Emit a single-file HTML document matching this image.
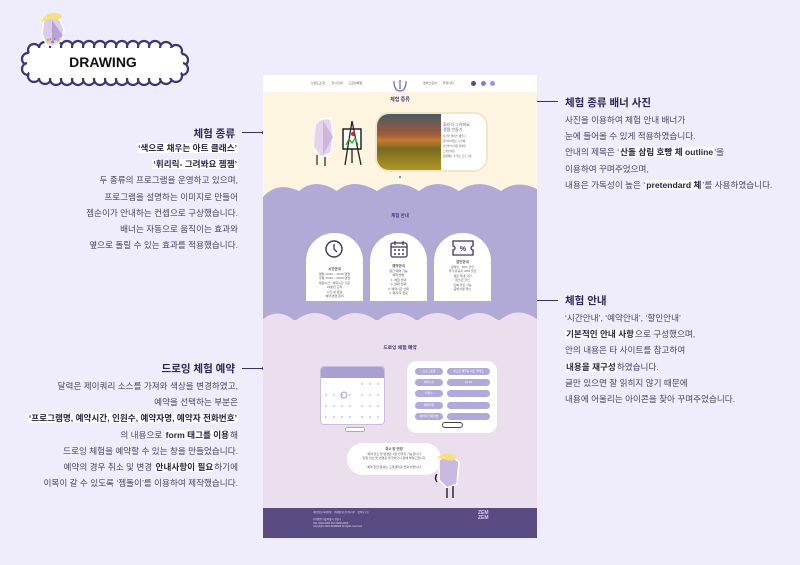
<!DOCTYPE html>
<html><head><meta charset="utf-8">
<style>
*{margin:0;padding:0;box-sizing:border-box}
body{width:800px;height:565px;background:#efecfb;position:relative;overflow:hidden;font-family:"Liberation Sans","Noto Sans CJK KR",sans-serif;color:#3a3355}
.a{position:absolute}
.t{font-size:8.6px;line-height:16.2px;color:#4a4560;white-space:nowrap}
.r{text-align:right}
.h{font-weight:bold;font-size:10.5px;color:#2e2656;white-space:nowrap}
.b{font-weight:bold;color:#2a2440;background:#fff;padding:0 1px}
.ln{position:absolute;height:1px;background:#3a2f6e}
.dot{position:absolute;width:5px;height:5px;border-radius:50%;background:#3a2f6e}
.s{font-size:3px;color:#555;line-height:4.5px;text-align:center;white-space:nowrap}
.pill{position:absolute;height:7px;border-radius:4px;background:#b1a8db;font-size:2.8px;color:#fff;text-align:center;line-height:7px}
</style></head><body>

<!-- logo -->
<svg class="a" style="left:0;top:0" width="200" height="90" viewBox="0 0 200 90">
 <g fill="#fff" stroke="#3d3475" stroke-width="2.2">
  <circle cx="34" cy="50" r="6"/><circle cx="45" cy="48" r="6"/><circle cx="56" cy="47" r="6"/><circle cx="67" cy="47" r="6"/><circle cx="78" cy="47" r="6"/><circle cx="89" cy="47" r="6"/><circle cx="100" cy="47" r="6"/><circle cx="111" cy="47" r="6"/><circle cx="122" cy="47" r="6"/><circle cx="133" cy="47" r="6"/><circle cx="144" cy="47" r="6"/><circle cx="155" cy="47" r="6"/><circle cx="166" cy="48" r="6"/><circle cx="176" cy="51" r="6"/>
  <circle cx="182" cy="60" r="6"/><circle cx="182" cy="69" r="6"/><circle cx="28" cy="59" r="6"/><circle cx="28" cy="69" r="6"/>
  <circle cx="34" cy="76" r="6"/><circle cx="45" cy="78" r="6"/><circle cx="56" cy="79" r="6"/><circle cx="67" cy="79" r="6"/><circle cx="78" cy="79" r="6"/><circle cx="89" cy="79" r="6"/><circle cx="100" cy="79" r="6"/><circle cx="111" cy="79" r="6"/><circle cx="122" cy="79" r="6"/><circle cx="133" cy="79" r="6"/><circle cx="144" cy="79" r="6"/><circle cx="155" cy="79" r="6"/><circle cx="166" cy="78" r="6"/><circle cx="176" cy="76" r="6"/>
 </g>
 <rect x="27" y="48" width="156" height="30" rx="12" fill="#fff"/>
 <path d="M44 18 Q52 14 60 20 L64 30 L62 40 L54 46 L46 44 L42 34 Z" fill="#d9cde8" stroke="#fff" stroke-width="1.5"/>
 <path d="M42 20 Q48 10 60 14 Q64 18 56 20 Q50 18 42 22Z" fill="#f5e27a"/>
 <path d="M52 20 L63 36 L52 42Z" fill="#b7a3d6"/>
 <circle cx="48" cy="40" r="1.5" fill="#f4a460"/><circle cx="58" cy="40" r="1.5" fill="#f4a460"/>
 <path d="M50 39h1M54 39h1M51 42h3" stroke="#333" stroke-width=".8"/>
 <text x="103" y="67" font-family="Liberation Sans" font-weight="bold" font-size="14" text-anchor="middle" fill="#111">DRAWING</text>
</svg>

<!-- left annotations -->
<div class="a h r" style="right:565px;top:126px">체험 종류</div>
<div class="ln" style="left:242px;top:132px;width:22px"></div><div class="dot" style="left:262px;top:130px"></div>
<div class="a t r" style="right:562px;top:140px"><span class="b">‘색으로 채우는 아트 클래스’</span><br><span class="b">‘휘리릭- 그려봐요 젬젬’</span><br>두 종류의 프로그램을 운영하고 있으며,<br>프로그램을 설명하는 이미지로 만들어<br>젬순이가 안내하는 컨셉으로 구상했습니다.<br>배너는 자동으로 움직이는 효과와<br>옆으로 돌릴 수 있는 효과를 적용했습니다.</div>

<div class="a h r" style="right:565px;top:361px">드로잉 체험 예약</div>
<div class="ln" style="left:242px;top:368px;width:22px"></div><div class="dot" style="left:262px;top:366px"></div>
<div class="a t r" style="right:562px;top:378px">달력은 제이쿼리 소스를 가져와 색상을 변경하였고,<br>예약을 선택하는 부분은<br><span class="b">‘프로그램명, 예약시간, 인원수, 예약자명, 예약자 전화번호’</span><br>의 내용으로 <span class="b">form 태그를 이용</span>해<br>드로잉 체험을 예약할 수 있는 창을 만들었습니다.<br>예약의 경우 취소 및 변경 <span class="b">안내사항이 필요</span>하기에<br>이목이 갈 수 있도록 ‘젬돌이’를 이용하여 제작했습니다.</div>

<!-- right annotations -->
<div class="a h" style="left:565px;top:95px">체험 종류 배너 사진</div>
<div class="ln" style="left:526px;top:101px;width:32px"></div><div class="dot" style="left:523px;top:99px"></div>
<div class="a t" style="left:565px;top:112px">사진을 이용하여 체험 안내 배너가<br>눈에 들어올 수 있게 적용하였습니다.<br>안내의 제목은 ‘<span class="b">산돌 삼림 호빵 체 outline</span>’을<br>이용하여 꾸며주었으며,<br>내용은 가독성이 높은 ‘<span class="b">pretendard 체</span>’를 사용하였습니다.</div>

<div class="a h" style="left:565px;top:293px">체험 안내</div>
<div class="ln" style="left:526px;top:300px;width:32px"></div><div class="dot" style="left:523px;top:298px"></div>
<div class="a t" style="left:565px;top:310px">‘시간안내’, ‘예약안내’, ‘할인안내’<br><span class="b">기본적인 안내 사항</span>으로 구성했으며,<br>안의 내용은 타 사이트를 참고하여<br><span class="b">내용을 재구성</span>하였습니다.<br>글만 있으면 잘 읽히지 않기 때문에<br>내용에 어울리는 아이콘을 찾아 꾸며주었습니다.</div>

<!-- page mock -->
<div class="a" style="left:263px;top:75px;width:274px;height:463px;overflow:hidden;background:#ebdfee">
 <div class="a" style="left:0;top:0;width:274px;height:17px;background:#fff"></div>
 <div class="a s" style="left:48px;top:6px;font-size:3px">브랜드소개 &nbsp;&nbsp;&nbsp;&nbsp;&nbsp;&nbsp; 전시안내 &nbsp;&nbsp;&nbsp;&nbsp;&nbsp; 드로잉체험</div>
 <div class="a s" style="left:160px;top:6px;font-size:3px">멤버스토어 &nbsp;&nbsp;&nbsp;&nbsp;&nbsp; 커뮤니티</div>
 <div class="a" style="left:208px;top:6px;width:5px;height:5px;border-radius:50%;background:#5b4a8a"></div>
 <div class="a" style="left:218px;top:6px;width:5px;height:5px;border-radius:50%;background:#8a7dbd"></div>
 <div class="a" style="left:227px;top:6px;width:5px;height:5px;border-radius:50%;background:#a395d0"></div>
 <svg class="a" style="left:128px;top:3px" width="18" height="17"><path d="M3 3 q0 10 6 10 q6 0 6-10 M9 2 v9" stroke="#7a6bb5" fill="none" stroke-width="1.3"/></svg>
 <div class="a" style="left:0;top:17px;width:274px;height:105px;background:#fdf5df"></div>
 <div class="a" style="left:0;top:21px;width:274px;text-align:center;font-size:5px;font-weight:bold;color:#4a3d7a">체험 종류</div>
 <svg class="a" style="left:46px;top:40px" width="60" height="60" viewBox="0 0 60 60">
  <path d="M6 10 Q10 2 22 4 L24 20 L22 38 L12 42 L4 32 Z" fill="#e6d3ec" stroke="#fff" stroke-width="1.5"/>
  <path d="M14 6 L24 22 L14 40Z" fill="#cdb7df"/>
  <path d="M8 40 v10 M16 42 v9" stroke="#222" stroke-width="1.2"/>
  <rect x="34" y="14" width="18" height="20" fill="#fff" stroke="#222" stroke-width="1.5"/>
  <path d="M43 6 L36 50 M43 6 L52 50 M43 34 v14" stroke="#222" stroke-width="1.3"/>
  <circle cx="44" cy="19" r="2" fill="#d22"/>
  <path d="M37 30 l3-6 3 4 3-5 3 7" stroke="#2a2" fill="none" stroke-width="1.2"/>
 </svg>
 <div class="a" style="left:112px;top:37px;width:113px;height:60px;border-radius:14px;background:#fff;border:2px solid #f0e6c8;overflow:hidden">
  <div class="a" style="left:0;top:0;width:64px;height:58px;background:linear-gradient(#4a5a63 0%,#a05a3a 35%,#c77a30 45%,#7a6a20 60%,#b59a22 100%)"></div>
  <div class="a s" style="left:66px;top:8px;text-align:left;color:#6a5aa0;font-size:4px;line-height:5px">휘리릭 그려봐요<br>젬젬 만들기</div>
  <div class="a s" style="left:66px;top:20px;text-align:left;font-size:2.6px;line-height:5px">자신만 캔버스 채우는<br>준비되어있는 도안에<br>자신만의 색을 칠하며<br>느껴보세요<br>함께해요 수 있는 프로그램</div>
 </div>
 <div class="a" style="left:136px;top:101px;width:2px;height:2px;background:#8a7dbd"></div>
 <svg class="a" style="left:0;top:108px" width="274" height="137" viewBox="0 0 274 137">
  <path d="M0 14 Q14 -2 36 8 Q52 -6 74 8 Q90 -6 114 8 Q134 -6 156 8 Q174 -6 196 8 Q216 -6 238 8 Q254 -4 274 6 V137 H0Z" fill="#b1aad6"/>
 </svg>
 <div class="a" style="left:0;top:138px;width:274px;text-align:center;font-size:4.5px;font-weight:bold;color:#4a3d7a">체험 안내</div>
 <div class="a" style="left:43px;top:158px;width:57px;height:68px;background:#fff;border-radius:28px 28px 0 0"></div>
 <div class="a" style="left:107px;top:158px;width:57px;height:68px;background:#fff;border-radius:28px 28px 0 0"></div>
 <div class="a" style="left:171px;top:158px;width:57px;height:68px;background:#fff;border-radius:28px 28px 0 0"></div>
 <svg class="a" style="left:61px;top:164px" width="20" height="20"><circle cx="10" cy="10" r="8" fill="none" stroke="#3d2f6e" stroke-width="1.4"/><path d="M10 5v5l3 3" stroke="#3d2f6e" fill="none" stroke-width="1.3"/></svg>
 <svg class="a" style="left:126px;top:164px" width="20" height="20"><rect x="2" y="4" width="16" height="14" rx="2" fill="none" stroke="#3d2f6e" stroke-width="1.3"/><path d="M2 8h16M6 2v4M14 2v4" stroke="#3d2f6e" stroke-width="1.2"/><path d="M5 11h2M9 11h2M13 11h2M5 15h2M9 15h2M13 15h2" stroke="#3d2f6e" stroke-width="1.4"/></svg>
 <svg class="a" style="left:189px;top:165px" width="22" height="16"><path d="M1 1h20v5a2 2 0 0 0 0 4v5H1v-5a2 2 0 0 0 0-4z" fill="none" stroke="#3d2f6e" stroke-width="1.3"/><text x="11" y="11" font-size="7" font-weight="bold" text-anchor="middle" fill="#3d2f6e" font-family="Liberation Sans">%</text></svg>
 <div class="a s" style="left:43px;top:192px;width:57px"><b style="font-size:3.4px">시간안내</b><br>평일 10:00 ~ 19:00 영업<br>주말 10:00 ~ 20:00 영업<br>체험시간 : 예약시간 기준<br>15분전 도착<br>시간 내 완료<br>예약 변경 문의</div>
 <div class="a s" style="left:107px;top:189px;width:57px"><b style="font-size:3.4px">예약안내</b><br>월간 예약 가능<br>예약 방법<br>1. 체험 선택<br>2. 날짜 선택<br>3. 예약시간 선택<br>4. 결제 후 완료</div>
 <div class="a s" style="left:171px;top:185px;width:57px"><b style="font-size:3.4px">할인안내</b><br>장애인 : 30% 할인<br>국가 유공자 30% 할인<br>경로 우대 할인<br>청소년 할인<br>단체 할인 가능<br>증빙서류 제시</div>
 <svg class="a" style="left:0;top:234px" width="274" height="22" viewBox="0 0 274 22">
  <path d="M0 10 Q16 -2 32 12 Q52 -4 72 12 Q92 -4 114 12 Q134 -4 154 12 Q174 -4 196 12 Q216 -4 236 12 Q254 -4 274 10 V22 H0Z" fill="#ebdfee"/>
 </svg>
 <div class="a" style="left:0;top:250px;width:274px;height:190px;background:#ebdfee"></div>
 <div class="a" style="left:0;top:269px;width:274px;text-align:center;font-size:4.8px;font-weight:bold;color:#3d2f6e">드로잉 체험 예약</div>
 <div class="a" style="left:57px;top:291px;width:65px;height:59px;background:#fff;border-radius:4px;border:1px solid #c8bde0;overflow:hidden">
  <div style="height:11px;background:#a99fd2"></div>
  <svg width="65" height="48" style="display:block"><g fill="#a99fd2">
   <circle cx="41" cy="6" r=".8"/><circle cx="49" cy="6" r=".8"/><circle cx="57" cy="6" r=".8"/>
   <circle cx="5" cy="17" r=".8"/><circle cx="13" cy="17" r=".8"/><circle cx="21" cy="17" r=".8"/><circle cx="29" cy="17" r=".8"/><circle cx="41" cy="17" r=".8"/><circle cx="49" cy="17" r=".8"/><circle cx="57" cy="17" r=".8"/>
   <circle cx="5" cy="28" r=".8"/><circle cx="13" cy="28" r=".8"/><circle cx="21" cy="28" r=".8"/><circle cx="29" cy="28" r=".8"/><circle cx="41" cy="28" r=".8"/><circle cx="49" cy="28" r=".8"/><circle cx="57" cy="28" r=".8"/>
   <circle cx="5" cy="39" r=".8"/><circle cx="13" cy="39" r=".8"/><circle cx="21" cy="39" r=".8"/><circle cx="29" cy="39" r=".8"/><circle cx="41" cy="39" r=".8"/><circle cx="49" cy="39" r=".8"/><circle cx="57" cy="39" r=".8"/></g>
   <circle cx="23" cy="17" r="3" fill="none" stroke="#a99fd2" stroke-width="1"/></svg>
 </div>
 <div class="a" style="left:82px;top:352px;width:20px;height:5px;border-radius:3px;border:1px solid #aaa;background:#fff"></div>
 <div class="a" style="left:144px;top:286px;width:90px;height:72px;background:#fff;border-radius:10px"></div>
 <div class="pill" style="left:152px;top:293px;width:28px">프로그램명</div><div class="pill" style="left:184px;top:293px;width:43px">색으로 채우는 아트 클래스</div>
 <div class="pill" style="left:152px;top:304px;width:28px">예약시간</div><div class="pill" style="left:184px;top:304px;width:43px">10:00</div>
 <div class="pill" style="left:152px;top:315px;width:28px">인원수</div><div class="pill" style="left:184px;top:315px;width:43px"></div>
 <div class="pill" style="left:152px;top:327px;width:28px">예약자명</div><div class="pill" style="left:184px;top:327px;width:43px"></div>
 <div class="pill" style="left:152px;top:338px;width:28px">예약자 전화번호</div><div class="pill" style="left:184px;top:338px;width:43px"></div>
 <div class="a" style="left:179px;top:347px;width:21px;height:6px;border-radius:3px;border:1px solid #444;background:#fff"></div>
 <div class="a" style="left:84px;top:368px;width:94px;height:32px;background:#fff;border-radius:16px"></div>
 <div class="a s" style="left:86px;top:372px;width:90px"><b style="font-size:3.4px">취소 및 변경</b><br>예약 취소 및 변경은 1일 전까지 가능합니다<br>당일 취소 및 변경은 불가하오니 양해 부탁드립니다<br><br>예약 관련 문의는 고객센터로 연락 바랍니다</div>
 <svg class="a" style="left:170px;top:375px" width="30" height="52" viewBox="0 0 30 52">
  <path d="M6 10 L16 4 L26 12 L24 34 L14 38 L6 30Z" fill="#c9b8e2" stroke="#fff" stroke-width="1.5"/>
  <path d="M4 8 Q12 0 24 6 Q22 12 14 10 Z" fill="#f5e27a"/>
  <path d="M14 38 v10 M20 36 v12 M4 24 q-3 4 0 8" stroke="#111" stroke-width="1.3" fill="none"/>
 </svg>
 <div class="a" style="left:0;top:433px;width:274px;height:30px;background:#5a4a82"></div>
 <div class="a s" style="left:50px;top:436px;text-align:left;color:#e0d8f0;font-size:2.5px;line-height:3.6px">개인정보처리방침 &nbsp;&nbsp; 이메일무단수집거부 &nbsp;&nbsp; 찾아오시는<br><br>(주)젬젬 서울특별시 강남구 <br>TEL 0000-0000 FAX 0000-0000<br>Copyright 2023 ZEMZEM All rights reserved</div>
 <div class="a" style="left:215px;top:436px;font-size:5px;line-height:5px;font-weight:bold;color:#e0c6f0">ZEM<br>ZEM</div>
</div>
</body></html>
